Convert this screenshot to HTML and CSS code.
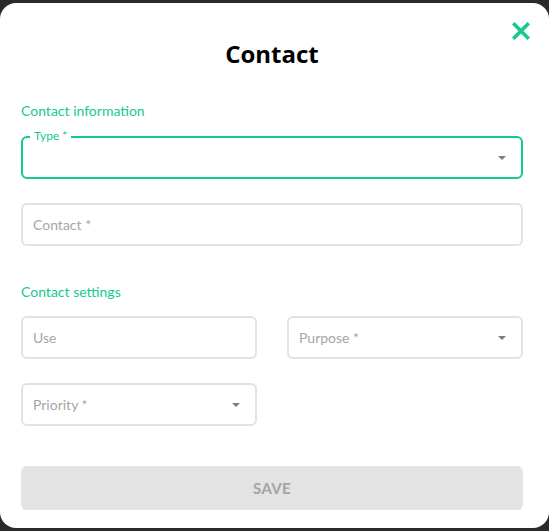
FILE: index.html
```html
<!DOCTYPE html>
<html lang="en">
<head>
  <meta charset="UTF-8">
  <meta name="viewport" content="width=device-width, initial-scale=1.0">
  <title>Contact</title>
  <link rel="stylesheet" href="styles.css">
</head>
<body>
  <div class="modal">
    <button class="close" aria-label="Close">
      <svg width="18" height="18" viewBox="0 0 18 18">
        <path d="M2.5 2.5 L15.5 15.5 M15.5 2.5 L2.5 15.5" stroke="#16c98d" stroke-width="3.6" stroke-linecap="square"/>
      </svg>
    </button>
    <h1>Contact</h1>

    <h2 class="section-title">Contact information</h2>
    <div class="field focused">
      <span class="float-label">Type *</span>
      <span class="arrow"></span>
    </div>
    <div class="field">
      <span class="placeholder">Contact *</span>
    </div>

    <h2 class="section-title settings">Contact settings</h2>
    <div class="grid">
      <div class="field">
        <span class="placeholder">Use</span>
      </div>
      <div class="field">
        <span class="placeholder">Purpose *</span>
        <span class="arrow"></span>
      </div>
      <div class="field">
        <span class="placeholder">Priority *</span>
        <span class="arrow"></span>
      </div>
    </div>

    <button class="save" disabled>SAVE</button>
  </div>
</body>
</html>
```

FILE: styles.css
```css
body {
  margin: 0;
  background-color: #2a2a2a;
  font-family: Lato, "Noto Sans", sans-serif;
  color: #000;
}
.modal {
  position: relative;
  margin-top: 3px;
  height: 525px;
  background: #fff;
  border-radius: 16px;
  padding: 0 26px 0 21px;
  box-sizing: border-box;
}
.close {
  position: absolute;
  top: 19px;
  right: 19px;
  padding: 0;
  border: none;
  background: none;
  cursor: pointer;
}
.close svg {
  display: block;
}
h1 {
  margin: 0;
  padding-top: 33px;
  height: 36px;
  line-height: 36px;
  text-align: center;
  font-size: 24px;
  font-weight: 700;
  font-family: "Open Sans", Lato, sans-serif;
}
.section-title {
  margin: 30px 0 16px;
  font-size: 14px;
  font-weight: 400;
  line-height: 18px;
  color: #16c98d;
}
.section-title.settings {
  margin-top: 37px;
  margin-bottom: 15px;
}
.field {
  position: relative;
  display: flex;
  align-items: center;
  height: 43px;
  border: 2px solid #e2e2e2;
  border-radius: 6px;
  box-sizing: border-box;
  padding: 0 10px;
  margin-bottom: 24px;
}
.field.focused {
  border-color: #16c98d;
}
.placeholder {
  font-size: 14px;
  color: #a6a6a6;
}
.float-label {
  position: absolute;
  top: -10px;
  left: 7px;
  padding: 0 4px;
  background: #fff;
  font-size: 12px;
  line-height: 15px;
  color: #16c98d;
}
.arrow {
  margin-left: auto;
  margin-right: 5px;
  width: 0;
  height: 0;
  border-left: 4px solid transparent;
  border-right: 4px solid transparent;
  border-top: 4px solid #7b7b7b;
}
.grid {
  display: grid;
  grid-template-columns: 1fr 1fr;
  column-gap: 30px;
}
.save {
  display: block;
  width: 100%;
  height: 44px;
  margin-top: 16px;
  border: none;
  border-radius: 6px;
  background: #e3e3e3;
  color: #a3a3a3;
  font-family: Lato, sans-serif;
  font-size: 15px;
  font-weight: 700;
  letter-spacing: 0.3px;
}
```
